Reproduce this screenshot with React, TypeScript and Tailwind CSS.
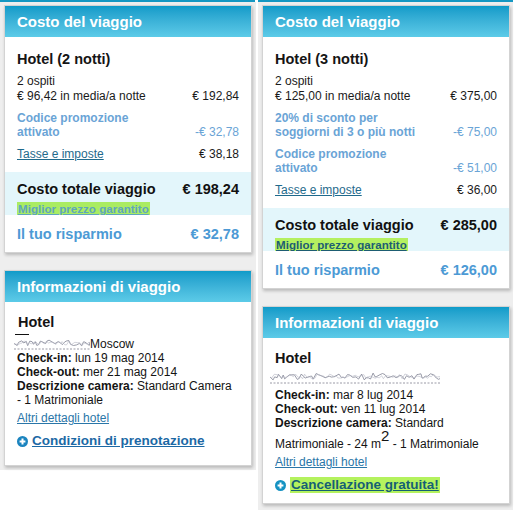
import React from "react";

function scribblePath(w: number, h: number, seed: number) {
  let s = seed;
  const rnd = () => {
    s = (s * 9301 + 49297) % 233280;
    return s / 233280;
  };
  let x = 0;
  let d = `M0 ${(h / 2).toFixed(1)}`;
  while (x < w) {
    x += 1.2 + rnd() * 2.2;
    const y = 1 + rnd() * (h - 3);
    d += ` L${Math.min(x, w).toFixed(1)} ${y.toFixed(1)}`;
  }
  return d;
}

function Scribble({ w, h, seed }: { w: number; h: number; seed: number }) {
  return (
    <svg width={w} height={h} viewBox={`0 0 ${w} ${h}`} className="block shrink-0">
      <path d={scribblePath(w, h - 2, seed)} fill="none" stroke="#7f8192" strokeWidth="0.8" />
      <path d={scribblePath(w, h - 4, seed + 7)} fill="none" stroke="#b3b6c3" strokeWidth="0.6" transform="translate(0 1)" />
      <line x1="0" y1={h - 1} x2={w} y2={h - 1} stroke="#9a9aa6" strokeWidth="1" strokeDasharray="2 1.5" />
    </svg>
  );
}

function PlusIcon({ color }: { color: string }) {
  return (
    <svg width="11" height="11" viewBox="0 0 11 11" className="shrink-0">
      <circle cx="5.5" cy="5.5" r="5.5" fill={color} />
      <path d="M5.5 2.6V8.4M2.6 5.5H8.4" stroke="#fff" strokeWidth="2" />
    </svg>
  );
}

function Card({ title, children }: { title: string; children: React.ReactNode }) {
  return (
    <div className="w-[248px] bg-white border border-[#d3d3d3] shadow-[1px_2px_3px_rgba(0,0,0,0.22)]">
      <div className="h-[31px] bg-gradient-to-b from-[#0e9bc9] to-[#5ccbe8] px-[12px] flex items-center text-white text-[15px] font-bold leading-none">
        {title}
      </div>
      {children}
    </div>
  );
}

function CostCard({
  nights,
  perNight,
  hotelTotal,
  discounts,
  taxes,
  total,
  saving,
  faded,
}: {
  nights: string;
  perNight: string;
  hotelTotal: string;
  discounts: { label: string; value: string }[];
  taxes: string;
  total: string;
  saving: string;
  faded: boolean;
}) {
  return (
    <Card title="Costo del viaggio">
      <div className="px-[12px] pt-[13px]">
        <div className="text-[14.5px] font-bold leading-[18px] text-[#151515]">{nights}</div>
        <div className="mt-[6px] text-[12px] leading-[15px] text-[#1a1a1a]">
          <div>2 ospiti</div>
          <div className="flex justify-between">
            <span>{perNight}</span>
            <span>{hotelTotal}</span>
          </div>
        </div>
        {discounts.map((d, i) => (
          <div
            key={i}
            className={`${i === 0 ? "mt-[7px]" : "mt-[8px]"} flex justify-between items-end text-[12px] leading-[14px] text-[#6aa4d6]`}
          >
            <span className="w-[140px] font-bold">{d.label}</span>
            <span>{d.value}</span>
          </div>
        ))}
        <div className="mt-[8px] flex justify-between text-[12px] leading-[14px] text-[#1a1a1a]">
          <span className="underline text-[#1f6a8c]">Tasse e imposte</span>
          <span>{taxes}</span>
        </div>
      </div>
      <div className="mt-[11px] bg-[#e3f6fb] px-[12px] pt-[9px]">
        <div className="flex justify-between text-[14.5px] font-bold leading-[17px] text-[#111]">
          <span>Costo totale viaggio</span>
          <span>{total}</span>
        </div>
        <div className="mt-[4px] h-[13px] flex">
          <span
            className={`px-[1px] text-[11.6px] leading-[13px] font-bold underline ${
              faded ? "bg-[#aaec62] text-[#5ea6bd]" : "bg-[#b4f060] text-[#1d5d72]"
            }`}
          >
            Miglior prezzo garantito
          </span>
        </div>
      </div>
      <div className="px-[12px] pt-[10px] pb-[9px] flex justify-between text-[14.5px] font-bold leading-[18px] text-[#4c9ad5]">
        <span>Il tuo risparmio</span>
        <span>{saving}</span>
      </div>
    </Card>
  );
}

export default function App() {
  return (
    <div className="w-[520px] h-[510px] bg-white flex font-['Liberation_Sans',Arial,sans-serif] text-[#1a1a1a] overflow-hidden">
      {/* Left column */}
      <div className="w-[256px] self-start">
        <div className="h-[2px] w-[255px] bg-[#1597c2]" />
        <div className="bg-[#eeeeee] pl-[4px] pt-[3px] pb-[4px] flex flex-col gap-[17px]">
          <CostCard
            nights="Hotel (2 notti)"
            perNight="€ 96,42 in media/a notte"
            hotelTotal="€ 192,84"
            discounts={[{ label: "Codice promozione attivato", value: "-€ 32,78" }]}
            taxes="€ 38,18"
            total="€ 198,24"
            saving="€ 32,78"
            faded
          />
          <Card title="Informazioni di viaggio">
            <div className="pl-[12px] pr-[6px] pt-[11px] pb-[16px] text-[12px] leading-[14px] text-[#141414]">
              <div className="text-[14.5px] font-bold leading-[18px] pl-[1px]">Hotel</div>
              <div className="mt-[3px] ml-[-2px] h-[1px] w-[14px] bg-[#111]" />
              <div className="mt-[2px] ml-[-3px] flex items-center h-[14px]">
                <Scribble w={76} h={11} seed={17} />
                <span>Moscow</span>
              </div>
              <div>
                <b>Check-in:</b> lun 19 mag 2014
              </div>
              <div>
                <b>Check-out:</b> mer 21 mag 2014
              </div>
              <div>
                <b>Descrizione camera:</b> Standard Camera
                <br />- 1 Matrimoniale
              </div>
              <div className="mt-[4px] underline text-[#2a76a8]">Altri dettagli hotel</div>
              <div className="mt-[8px] flex items-center gap-[4px]">
                <PlusIcon color="#1b84bf" />
                <span className="text-[13.5px] leading-[16px] font-bold underline text-[#1c69a5]">
                  Condizioni di prenotazione
                </span>
              </div>
            </div>
          </Card>
        </div>
      </div>

      {/* Right column */}
      <div className="ml-[2px] w-[255px] h-full flex flex-col">
        <div className="h-[2px] bg-[#1597c2]" />
        <div className="flex-1 bg-[#eeeeee] pl-[4px] pt-[3px] flex flex-col gap-[17px]">
          <CostCard
            nights="Hotel (3 notti)"
            perNight="€ 125,00 in media/a notte"
            hotelTotal="€ 375,00"
            discounts={[
              { label: "20% di sconto per soggiorni di 3 o più notti", value: "-€ 75,00" },
              { label: "Codice promozione attivato", value: "-€ 51,00" },
            ]}
            taxes="€ 36,00"
            total="€ 285,00"
            saving="€ 126,00"
            faded={false}
          />
          <Card title="Informazioni di viaggio">
            <div className="pl-[12px] pr-[6px] pt-[11px] pb-[10px] text-[12px] leading-[14px] text-[#141414]">
              <div className="text-[14.5px] font-bold leading-[18px]">Hotel</div>
              <div className="mt-[5px] ml-[-5px]">
                <Scribble w={170} h={12} seed={41} />
              </div>
              <div className="mt-[4px]">
                <b>Check-in:</b> mar 8 lug 2014
              </div>
              <div>
                <b>Check-out:</b> ven 11 lug 2014
              </div>
              <div>
                <b>Descrizione camera:</b> Standard Matrimoniale - 24 m
                <sup className="relative top-[-2px] align-super text-[15px] leading-none">2</sup> - 1 Matrimoniale
              </div>
              <div className="mt-[4px] underline text-[#2a76a8]">Altri dettagli hotel</div>
              <div className="mt-[8px] flex items-center gap-[4px]">
                <PlusIcon color="#1592c2" />
                <span className="px-[1px] text-[13.5px] leading-[16px] font-bold underline text-[#155f74] bg-[#b4f25e]">
                  Cancellazione gratuita!
                </span>
              </div>
            </div>
          </Card>
        </div>
      </div>
    </div>
  );
}
